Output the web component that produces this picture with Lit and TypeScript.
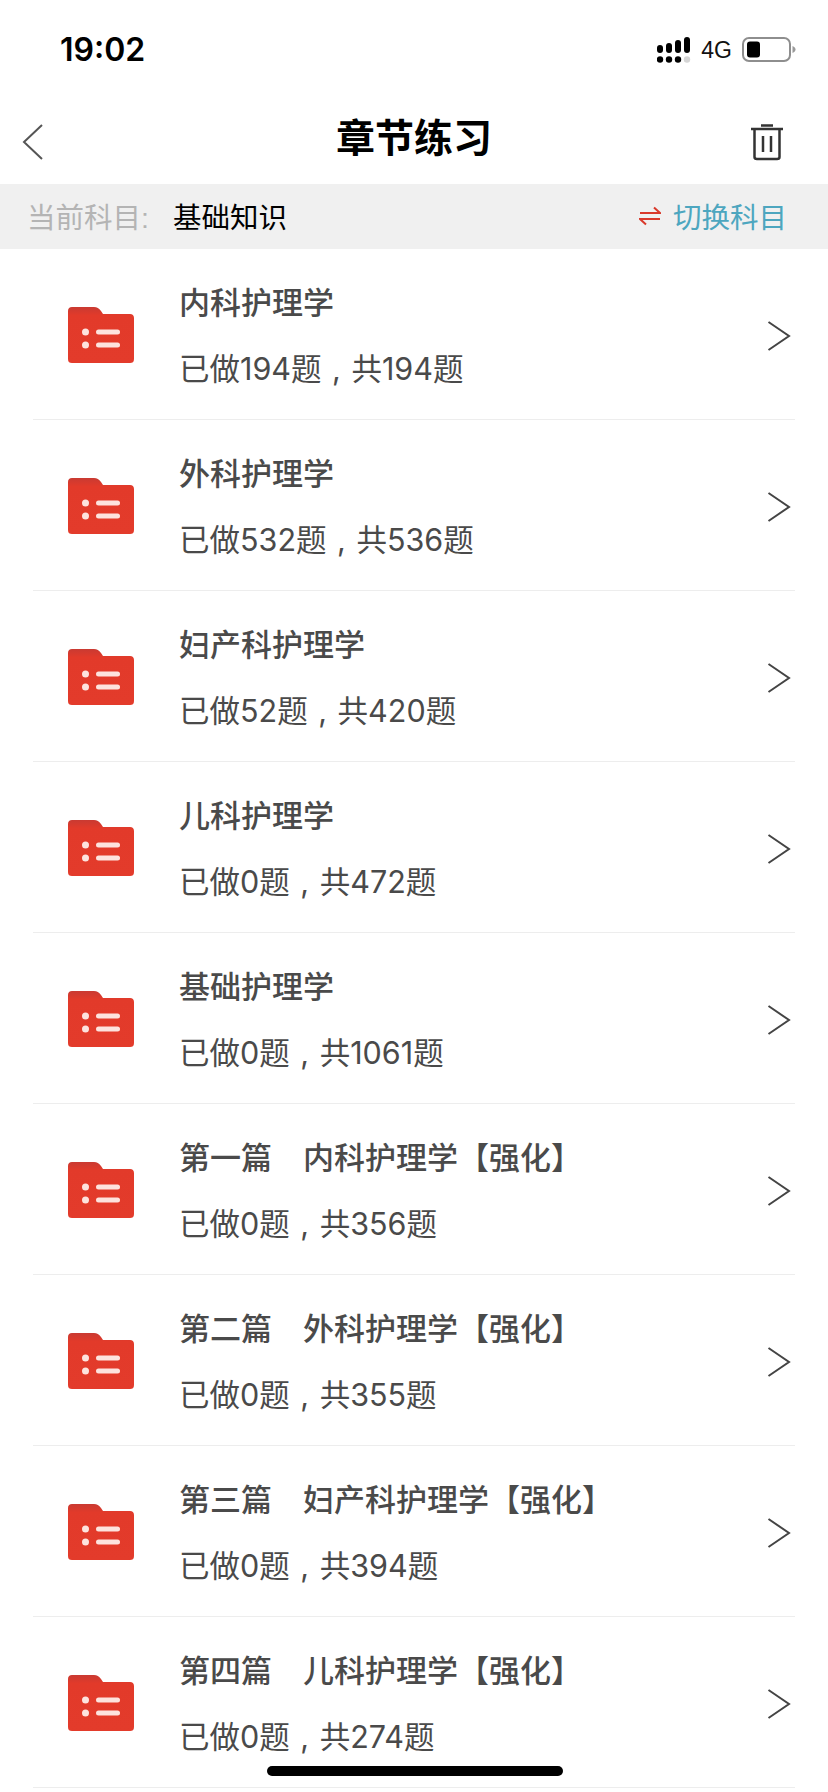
import { LitElement, css, html, svg } from "lit";
import { customElement } from "lit/decorators.js";

const rows = [
    ["内科护理学", "已做194题 , 共194题"],
    ["外科护理学", "已做532题 , 共536题"],
    ["妇产科护理学", "已做52题 , 共420题"],
    ["儿科护理学", "已做0题 , 共472题"],
    ["基础护理学", "已做0题 , 共1061题"],
    ["第一篇　内科护理学【强化】", "已做0题 , 共356题"],
    ["第二篇　外科护理学【强化】", "已做0题 , 共355题"],
    ["第三篇　妇产科护理学【强化】", "已做0题 , 共394题"],
    ["第四篇　儿科护理学【强化】", "已做0题 , 共274题"],
];

const folder = svg`<svg class="folder" width="66" height="56" viewBox="0 0 66 56">
  <defs>
    <linearGradient id="fold" x1="0" y1="0" x2="0" y2="1">
      <stop offset="0" stop-color="#c93a32"/>
      <stop offset="0.15" stop-color="#e23a2a"/>
      <stop offset="1" stop-color="#e33b2b"/>
    </linearGradient>
  </defs>
  <path d="M4 0H26C29 0 31 1.500 33 4L35 7H62C64.500 7 66 8.500 66 11V52C66 55 64.500 56 62 56H4C1.500 56 0 55 0 52V4C0 1.500 1.500 0 4 0Z" fill="url(#fold)"/>
  <circle cx="17.500" cy="25" r="3.500" fill="#fde3de"/>
  <circle cx="17.500" cy="38" r="3.500" fill="#fde3de"/>
  <rect x="28" y="22.500" width="24" height="5" rx="2.500" fill="#fde3de"/>
  <rect x="28" y="35.500" width="24" height="5" rx="2.500" fill="#fde3de"/>
</svg>`;

@customElement("app-root")
export class AppRoot extends LitElement {
    static styles = css`
      :host {
        display: block;
        width: 828px;
        height: 1792px;
        overflow: hidden;
        position: relative;
        background: #fff;
        font-family: "Liberation Sans", "Noto Sans CJK SC", sans-serif;
      }
      .status {
        height: 100px;
        display: flex;
        justify-content: space-between;
        padding: 30px 32px 0 60px;
        box-sizing: border-box;
      }
      .time {
        font-family: Inter, "Liberation Sans", sans-serif;
        font-size: 32px;
        font-weight: 600;
        line-height: 40px;
        color: #000;
      }
      .indicators {
        display: flex;
        align-items: center;
        gap: 10px;
        height: 28px;
        margin-top: 6px;
      }
      .net {
        font-size: 23px;
        color: #111;
      }
      .nav {
        height: 84px;
        display: flex;
        align-items: center;
        justify-content: space-between;
        padding: 0 44px 0 22px;
      }
      .nav .side {
        width: 34px;
        display: flex;
      }
      .nav .side.start {
        width: 56px;
      }
      .nav h1 {
        margin: 0 0 14px 0;
        font-size: 39px;
        font-weight: 700;
        color: #000;
      }
      .subject {
        height: 65px;
        background: #f0f0f0;
        display: flex;
        align-items: center;
        padding: 0 41px 2px 27px;
        box-sizing: border-box;
        font-size: 28.500px;
      }
      .subject .label {
        color: #b4b4b4;
        width: 146px;
      }
      .subject .name {
        color: #000;
        flex: 1;
      }
      .subject .swap {
        color: #4da6bf;
        margin-left: 12px;
      }
      .row {
        height: 171px;
        margin: 0 33px;
        box-sizing: border-box;
        border-bottom: 1px solid #ededed;
        display: flex;
        align-items: center;
        padding-left: 35px;
      }
      .folder {
        flex: none;
        margin: 2px 45px 0 0;
      }
      .text {
        flex: 1;
        color: #4a4a4a;
        padding-top: 5px;
      }
      .title {
        font-size: 31px;
        line-height: 40px;
        margin-bottom: 25px;
        font-weight: 500;
      }
      .sub {
        font-family: Inter, "Noto Sans CJK SC", sans-serif;
        font-size: 30.500px;
        line-height: 40px;
        word-spacing: 2px;
      }
      .chev {
        margin: 4px 4px 0 0;
      }
      .home {
        position: absolute;
        left: 267px;
        top: 1766px;
        width: 296px;
        height: 10px;
        border-radius: 5px;
        background: #000;
      }
    `;

    render() {
        return html`
      <div class="status">
        <div class="time">19:02</div>
        <div class="indicators">
          <svg width="34" height="26" viewBox="0 0 34 26">
            <g fill="#000">
              <circle cx="3" cy="22.500" r="3.200"/>
              <circle cx="12" cy="22.500" r="3.200"/>
              <circle cx="21" cy="22.500" r="3.200"/>
              <rect x="0" y="8" width="6" height="8" rx="3"/>
              <rect x="9" y="6" width="6" height="10" rx="3"/>
              <rect x="18" y="3" width="6" height="13" rx="3"/>
              <rect x="27" y="0" width="6" height="16" rx="3"/>
            </g>
            <circle cx="30" cy="22.500" r="3.200" fill="#d5d5d5"/>
          </svg>
          <span class="net">4G</span>
          <svg width="54" height="26" viewBox="0 0 54 26">
            <rect x="1" y="1" width="47" height="23" rx="6" fill="none" stroke="#8e8e8e" stroke-width="2"/>
            <rect x="5" y="4.500" width="13" height="16" rx="3" fill="#000"/>
            <path d="M50.500 9C52.500 10 53.500 11 53.500 12.500S52.500 15 50.500 16Z" fill="#9a9a9a"/>
          </svg>
        </div>
      </div>
      <div class="nav">
        <div class="side start">
          <svg width="22" height="38" viewBox="0 0 22 38">
            <path d="M20 2L2 19L20 36" fill="none" stroke="#555" stroke-width="2"/>
          </svg>
        </div>
        <h1>章节练习</h1>
        <div class="side">
          <svg width="34" height="38" viewBox="0 0 34 38">
            <path d="M1 6H33M11 2.500H23M4.500 6V34C4.500 35.500 5.500 36 7 36H27C28.500 36 29.500 35.500 29.500 34V6M13 13V29M21 13V29" fill="none" stroke="#333" stroke-width="2.500"/>
          </svg>
        </div>
      </div>
      <div class="subject">
        <span class="label">当前科目:</span>
        <span class="name">基础知识</span>
        <svg width="22" height="20" viewBox="0 0 22 20">
          <path d="M1 7H21L15 1.500M21 13H1L7 18.500" fill="none" stroke="#d9392b" stroke-width="2"/>
        </svg>
        <span class="swap">切换科目</span>
      </div>
      ${rows.map(
          ([title, sub]) => html`
        <div class="row">
          ${folder}
          <div class="text">
            <div class="title">${title}</div>
            <div class="sub">${sub}</div>
          </div>
          <svg class="chev" width="24" height="30" viewBox="0 0 24 30">
            <path d="M1.500 1L22 15L1.500 29" fill="none" stroke="#444" stroke-width="2"/>
          </svg>
        </div>
      `,
      )}
      <div class="home"></div>
    `;
    }
}
